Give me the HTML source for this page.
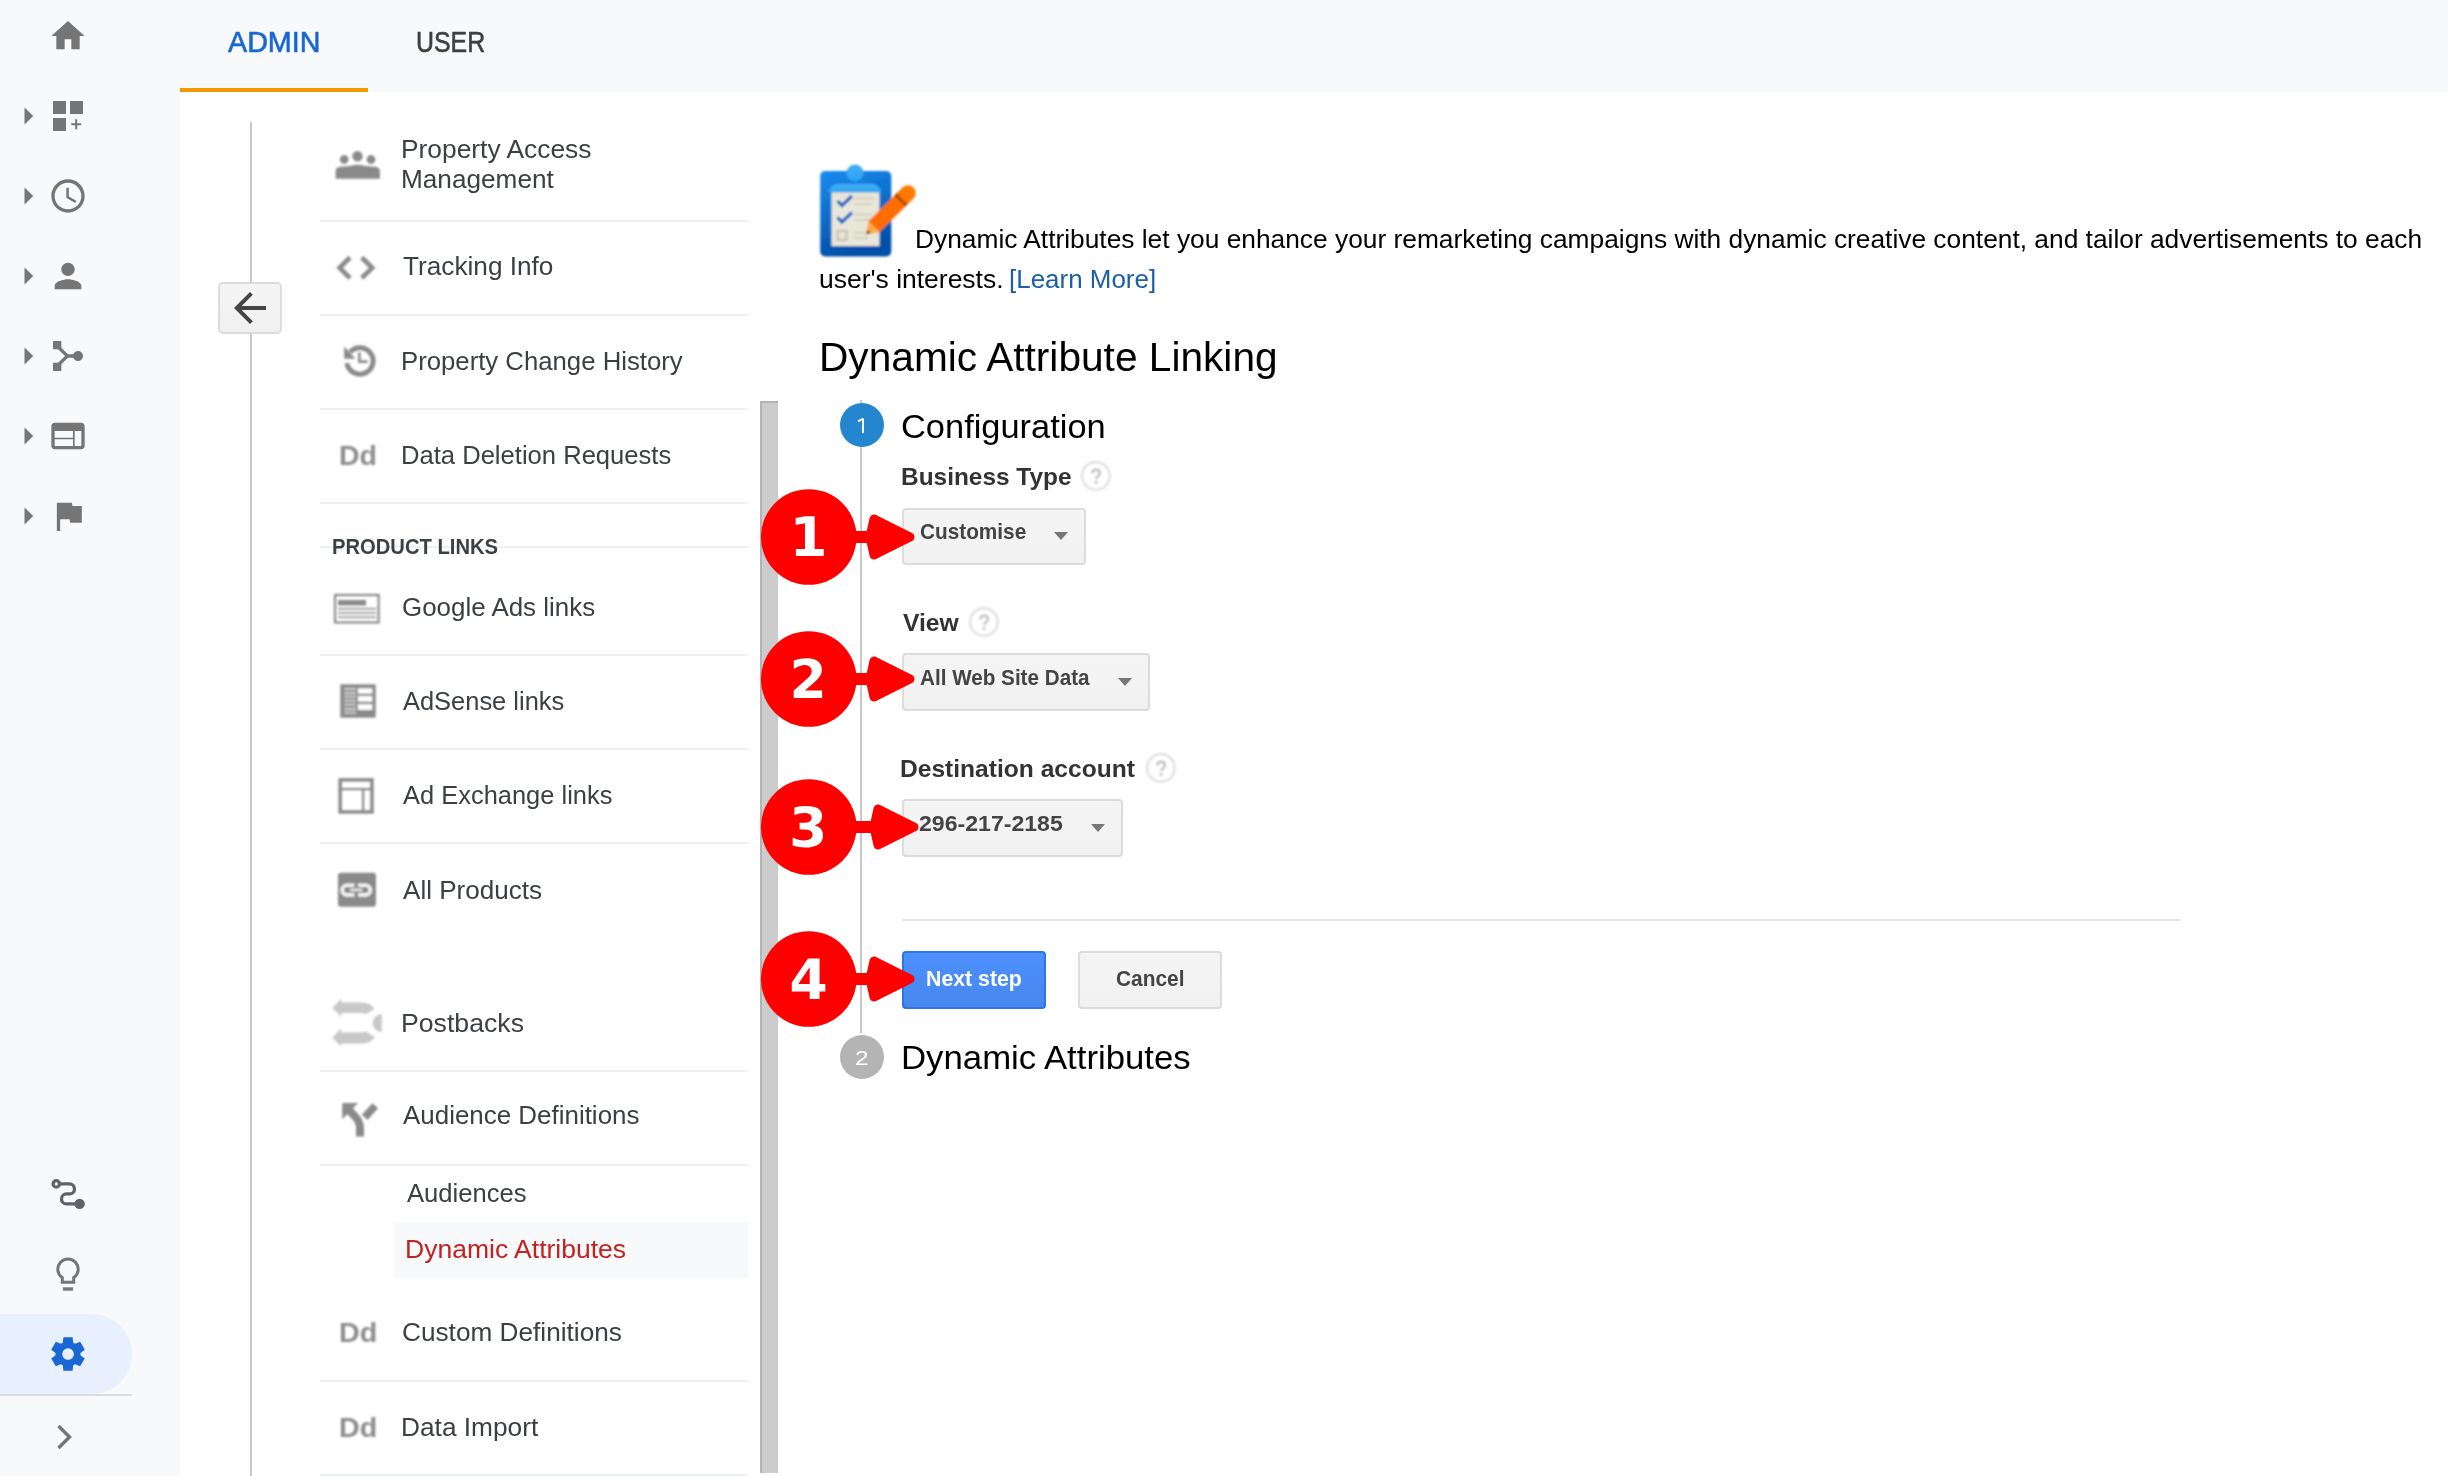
<!DOCTYPE html>
<html><head><meta charset="utf-8">
<style>
html,body{margin:0;padding:0;}
body{width:2448px;height:1476px;position:relative;overflow:hidden;background:#fff;font-family:"Liberation Sans",sans-serif;}
.a{position:absolute;}
.t{position:absolute;white-space:nowrap;line-height:1;transform-origin:0 0;}
.sep{position:absolute;left:320px;width:428px;height:2px;background:#eef1f2;}
.dd{position:absolute;left:902px;border:2px solid #dcdcdc;border-radius:4px;background:linear-gradient(#f5f5f5,#f1f1f1);box-sizing:border-box;}
.help{position:absolute;width:30px;height:30px;border:2px solid #e3e3e3;border-radius:50%;box-sizing:border-box;}
.help b{position:absolute;left:0;top:0;width:26px;text-align:center;font:20px/26px "Liberation Sans",sans-serif;color:#d4d4d4;}
svg{position:absolute;left:0;top:0;overflow:visible;}
</style></head>
<body>

<div class="a" style="left:0;top:0;width:2448px;height:92px;background:#f8f9fa;"></div>
<div class="a" style="left:0;top:0;width:180px;height:1476px;background:#f8f9fa;"></div>
<div class="a" style="left:180px;top:88px;width:188px;height:4px;background:#f29900;"></div>
<div class="a" style="left:-40px;top:1314px;width:172px;height:80px;border-radius:0 40px 40px 0;background:#e8f0fe;"></div>
<div class="a" style="left:0;top:1394px;width:132px;height:2px;background:#dadce0;"></div>
<div class="a" style="left:250px;top:122px;width:2px;height:1354px;background:#c8c8c8;"></div>
<div class="a" style="left:218px;top:282px;width:64px;height:52px;border:2px solid #dcdcdc;border-radius:5px;background:linear-gradient(#f5f5f5,#f0f0f0);box-sizing:border-box;"></div>
<div class="sep" style="top:220px;"></div>
<div class="sep" style="top:314px;"></div>
<div class="sep" style="top:408px;"></div>
<div class="sep" style="top:502px;"></div>
<div class="sep" style="top:546px;"></div>
<div class="sep" style="top:654px;"></div>
<div class="sep" style="top:748px;"></div>
<div class="sep" style="top:842px;"></div>
<div class="sep" style="top:1070px;"></div>
<div class="sep" style="top:1164px;"></div>
<div class="sep" style="top:1380px;"></div>
<div class="sep" style="top:1474px;"></div>
<div class="a" style="left:394px;top:1222px;width:354px;height:56px;background:#f8f9fa;"></div>
<div class="a" style="left:760px;top:401px;width:18px;height:1072px;background:#cccccc;border-left:2px solid #b3b3b3;border-top:2px solid #b3b3b3;box-sizing:border-box;"></div>
<div class="a" style="left:860px;top:400px;width:2px;height:633px;background:#c8c8c8;"></div>
<div class="a" style="left:840px;top:403px;width:44px;height:44px;border-radius:50%;background:#2486cf;"></div>
<div class="a" style="left:840px;top:1035px;width:44px;height:44px;border-radius:50%;background:#b4b4b4;"></div>
<div class="dd" style="top:508px;width:184px;height:57px;"></div>
<div class="dd" style="top:653px;width:248px;height:58px;"></div>
<div class="dd" style="top:799px;width:221px;height:58px;"></div>
<div class="a" style="left:902px;top:919px;width:1278px;height:2px;background:#e5e5e5;"></div>
<div class="a" style="left:902px;top:951px;width:144px;height:58px;border:2px solid #2f74e6;border-radius:4px;background:linear-gradient(#4d90fe,#4787ed);box-sizing:border-box;"></div>
<div class="a" style="left:1078px;top:951px;width:144px;height:58px;border:2px solid #dcdcdc;border-radius:4px;background:linear-gradient(#f5f5f5,#f1f1f1);box-sizing:border-box;"></div>
<div class="t" id="admin" style="left:228.40px;top:28.00px;font-size:29px;color:#1967d2;transform:scaleX(0.9890);-webkit-text-stroke:0.6px #1967d2;">ADMIN</div>
<div class="t" id="user" style="left:415.88px;top:28.00px;font-size:29px;color:#3c4043;transform:scaleX(0.8584);-webkit-text-stroke:0.6px #3c4043;">USER</div>
<div class="t" id="n1" style="left:400.97px;top:136.20px;font-size:26px;color:#3c4043;transform:scaleX(1.0135);">Property Access</div>
<div class="t" id="n1b" style="left:400.99px;top:166.00px;font-size:26px;color:#3c4043;transform:scaleX(1.0067);">Management</div>
<div class="t" id="n2" style="left:402.70px;top:253.00px;font-size:26px;color:#3c4043;transform:scaleX(1.0074);">Tracking Info</div>
<div class="t" id="n3" style="left:401.02px;top:348.00px;font-size:26px;color:#3c4043;transform:scaleX(0.9894);">Property Change History</div>
<div class="t" id="n4" style="left:401.03px;top:441.70px;font-size:26px;color:#3c4043;transform:scaleX(0.9842);">Data Deletion Requests</div>
<div class="t" id="pl" style="left:331.78px;top:536.00px;font-size:22px;font-weight:bold;color:#3c4043;transform:scaleX(0.9179);">PRODUCT LINKS</div>
<div class="t" id="n5" style="left:402.00px;top:594.30px;font-size:26px;color:#3c4043;transform:scaleX(0.9974);">Google Ads links</div>
<div class="t" id="n6" style="left:403.00px;top:688.00px;font-size:26px;color:#3c4043;transform:scaleX(0.9787);">AdSense links</div>
<div class="t" id="n7" style="left:403.00px;top:782.00px;font-size:26px;color:#3c4043;transform:scaleX(0.9789);">Ad Exchange links</div>
<div class="t" id="n8" style="left:403.00px;top:877.00px;font-size:26px;color:#3c4043;transform:scaleX(1.0029);">All Products</div>
<div class="t" id="n9" style="left:400.95px;top:1010.00px;font-size:26px;color:#3c4043;transform:scaleX(1.0256);">Postbacks</div>
<div class="t" id="n10" style="left:403.00px;top:1102.40px;font-size:26px;color:#3c4043;transform:scaleX(0.9975);">Audience Definitions</div>
<div class="t" id="n11" style="left:407.20px;top:1179.60px;font-size:26px;color:#3c4043;transform:scaleX(0.9843);">Audiences</div>
<div class="t" id="n12" style="left:404.66px;top:1236.30px;font-size:26px;color:#c5221f;transform:scaleX(1.0201);">Dynamic Attributes</div>
<div class="t" id="n13" style="left:401.99px;top:1319.00px;font-size:26px;color:#3c4043;transform:scaleX(1.0079);">Custom Definitions</div>
<div class="t" id="n14" style="left:400.98px;top:1414.00px;font-size:26px;color:#3c4043;transform:scaleX(1.0104);">Data Import</div>
<div class="t" id="dd1" style="left:339.47px;top:441.80px;font-size:28px;font-weight:bold;color:#8c8c8c;transform:scaleX(1.0147);filter:blur(0.8px);">Dd</div>
<div class="t" id="dd2" style="left:339.45px;top:1319.00px;font-size:28px;font-weight:bold;color:#8c8c8c;transform:scaleX(1.0235);filter:blur(0.8px);">Dd</div>
<div class="t" id="dd3" style="left:339.45px;top:1413.50px;font-size:28px;font-weight:bold;color:#8c8c8c;transform:scaleX(1.0235);filter:blur(0.8px);">Dd</div>
<div class="t" id="m1" style="left:915.18px;top:225.80px;font-size:26px;color:#000;transform:scaleX(1.0125);">Dynamic Attributes let you enhance your remarketing campaigns with dynamic creative content, and tailor advertisements to each</div>
<div class="t" id="m2a" style="left:818.66px;top:265.90px;font-size:26px;color:#000;transform:scaleX(1.0181);">user's interests.</div>
<div class="t" id="m2b" style="left:1008.90px;top:265.90px;font-size:26px;color:#1a5fa8;transform:scaleX(0.9979);">[Learn More]</div>
<div class="t" id="m3" style="left:818.55px;top:337.00px;font-size:40px;color:#000;transform:scaleX(1.0161);">Dynamic Attribute Linking</div>
<div class="t" id="m4" style="left:901.48px;top:409.00px;font-size:34px;color:#000;transform:scaleX(1.0121);">Configuration</div>
<div class="t" id="l1" style="left:900.76px;top:464.70px;font-size:24px;font-weight:bold;color:#333;transform:scaleX(1.0176);">Business Type</div>
<div class="t" id="d1" style="left:919.56px;top:520.80px;font-size:22px;font-weight:bold;color:#444;transform:scaleX(0.9441);">Customise</div>
<div class="t" id="l2" style="left:902.80px;top:610.80px;font-size:24px;font-weight:bold;color:#333;transform:scaleX(1.0278);">View</div>
<div class="t" id="d2" style="left:919.56px;top:666.90px;font-size:22px;font-weight:bold;color:#444;transform:scaleX(0.9389);">All Web Site Data</div>
<div class="t" id="l3" style="left:900.35px;top:757.30px;font-size:24px;font-weight:bold;color:#333;transform:scaleX(1.0242);">Destination account</div>
<div class="t" id="d3" style="left:918.95px;top:813.00px;font-size:22px;font-weight:bold;color:#444;transform:scaleX(1.0493);">296-217-2185</div>
<div class="t" id="b1" style="left:926.33px;top:968.30px;font-size:22px;font-weight:bold;color:#fff;transform:scaleX(0.9680);">Next step</div>
<div class="t" id="b2" style="left:1115.65px;top:968.30px;font-size:22px;font-weight:bold;color:#444;transform:scaleX(0.9486);">Cancel</div>
<div class="t" id="m5" style="left:901.23px;top:1040.40px;font-size:34px;color:#000;transform:scaleX(1.0222);">Dynamic Attributes</div>
<div class="t" id="s2" style="left:855.28px;top:1048.00px;font-size:20px;color:#fff;transform:scaleX(1.2222);">2</div>
<svg width="2448" height="1476" viewBox="0 0 2448 1476"><g fill="#757575"><path transform="translate(48,16) scale(1.6667)" d="M10 20v-6h4v6h5v-8h3L12 3 2 12h3v8z"/><rect x="53" y="101" width="13" height="13"/><rect x="70" y="101" width="13" height="13"/><rect x="53" y="118" width="13" height="13"/><path transform="translate(48,176) scale(1.6667)" d="M11.99 2C6.47 2 2 6.48 2 12s4.47 10 9.99 10C17.52 22 22 17.52 22 12S17.52 2 11.99 2zM12 20c-4.42 0-8-3.58-8-8s3.58-8 8-8 8 3.58 8 8-3.58 8-8 8zm.5-13H11v6l5.25 3.15.75-1.23-4.5-2.67z"/><path transform="translate(48,256) scale(1.6667)" d="M12 12c2.21 0 4-1.79 4-4s-1.79-4-4-4-4 1.79-4 4 1.79 4 4 4zm0 2c-2.67 0-8 1.34-8 4v2h16v-2c0-2.66-5.33-4-8-4z"/><path transform="translate(88,336) rotate(90) scale(1.6667)" d="M17 16l-4-4V8.82C14.16 8.4 15 7.3 15 6c0-1.66-1.34-3-3-3S9 4.34 9 6c0 1.3.84 2.4 2 2.82V12l-4 4H3v5h5v-3.05l4-4.2 4 4.2V21h5v-5h-4z"/><path transform="translate(48,416) scale(1.6667)" d="M20 4H4c-1.1 0-1.99.9-1.99 2L2 18c0 1.1.9 2 2 2h16c1.1 0 2-.9 2-2V6c0-1.1-.9-2-2-2zm-5 14H4v-4h11v4zm0-5H4V9h11v4zm5 5h-4V9h4v9z"/><path transform="translate(48.5,496) scale(1.6667)" d="M14.4 6L14 4H5v17h2v-7h5.6l.4 2h7V6z"/><path d="M24.5 107.5 L33.2 116 L24.5 124.5 Z"/><path d="M24.5 187.5 L33.2 196 L24.5 204.5 Z"/><path d="M24.5 267.5 L33.2 276 L24.5 284.5 Z"/><path d="M24.5 347.5 L33.2 356 L24.5 364.5 Z"/><path d="M24.5 427.5 L33.2 436 L24.5 444.5 Z"/><path d="M24.5 507.5 L33.2 516 L24.5 524.5 Z"/></g><path d="M76.2 119.2 V129.2 M71.2 124.2 H81.2" stroke="#757575" stroke-width="2"/><g fill="none" stroke="#5f6368" stroke-width="3.3"><circle cx="56.3" cy="1183.9" r="3.2"/><path d="M59.5 1183.9 H69.5 A5 5 0 0 1 69.5 1193.9 H66.5 A5 5 0 0 0 66.5 1203.9 H76"/></g><circle cx="79.6" cy="1203.9" r="5.2" fill="#5f6368"/><path d="M62.3 1282.2 V1277.6 A10.2 10.2 0 1 1 73.7 1277.6 V1282.2 Z" fill="none" stroke="#757575" stroke-width="3"/><rect x="63" y="1287.3" width="10" height="3.4" fill="#757575"/><path transform="translate(48,1334) scale(0.041667)" fill="#1967d2" d="M370 880l-16-128q-13-5-24.5-12T307 725l-119 50L78 585l103-78q-1-7-1-13.5v-27q0-6.5 1-13.5L78 375l110-190 119 50q11-8 23-15t24-12l16-128h220l16 128q13 5 24.5 12t22.5 15l119-50 110 190-103 78q1 7 1 13.5v27q0 6.5-2 13.5l103 78-110 190-118-50q-11 8-23 15t-24 12L590 880H370Zm112-260q58 0 99-41t41-99q0-58-41-99t-99-41q-59 0-99.5 41T342 480q0 58 40.5 99t99.5 41Z"/><path d="M58.5 1426 L69.5 1437 L58.5 1448" fill="none" stroke="#757575" stroke-width="3.4"/><path transform="translate(226,284) scale(2)" fill="#444" d="M20 11H7.83l5.59-5.59L12 4l-8 8 8 8 1.41-1.41L7.83 13H20v-2z"/><defs><filter id="bl" x="-20%" y="-20%" width="140%" height="140%"><feGaussianBlur stdDeviation="0.8"/></filter><filter id="bl2" x="-20%" y="-20%" width="140%" height="140%"><feGaussianBlur stdDeviation="0.8"/></filter></defs><g filter="url(#bl)"><g fill="#8a8a8a"><circle cx="344.2" cy="159.5" r="4.4"/><circle cx="357.5" cy="156.2" r="5.2"/><circle cx="371" cy="159.5" r="4.4"/><path d="M335.6 178.7 V171 Q335.6 167.5 340 166.8 L350 166 Q357.5 163.5 365 166 L375.5 166.8 Q379.9 167.5 379.9 171 V178.7 Z"/></g><path d="M350 257.5 L339.6 267.8 L350 278 M361.8 257.5 L372.2 267.8 L361.8 278" fill="none" stroke="#8a8a8a" stroke-width="4.6"/><path d="M350.09 352.07 A13.2 13.2 0 1 1 346.88 363.10" fill="none" stroke="#8a8a8a" stroke-width="5"/><polygon points="344.1,346.5 344.1,358.7 355.5,358.7" fill="#8a8a8a"/><path d="M359.35 352.6 V361.6 H367.5" fill="none" stroke="#8a8a8a" stroke-width="2.6"/><rect x="335" y="595" width="43.6" height="27.4" fill="none" stroke="#8a8a8a" stroke-width="2.2"/><rect x="338" y="600" width="28" height="5.5" fill="#8a8a8a"/><path d="M338 608.8 H376 M338 613 H376 M338 617.2 H376" stroke="#8a8a8a" stroke-width="1.5"/><rect x="340.3" y="684.3" width="35.4" height="33.4" fill="#8a8a8a"/><path d="M344.3 689 H356.1 M344.3 692.9 H356.1 M344.3 696.8 H356.1 M344.3 700.8 H356.1 M344.3 704.8 H356.1 M344.3 708.9 H356.1 M344.3 712.8 H356.1" stroke="#d0d0d0" stroke-width="2"/><rect x="358" y="688.3" width="14.3" height="5.4" fill="#fff"/><rect x="358" y="696.1" width="14.3" height="5.6" fill="#fff"/><rect x="358" y="704.2" width="14.3" height="5.7" fill="#fff"/><rect x="340.15" y="779.85" width="31.8" height="32.1" fill="none" stroke="#8a8a8a" stroke-width="3.5"/><rect x="340" y="788" width="32" height="2.2" fill="#8a8a8a"/><rect x="362" y="789" width="2.2" height="23" fill="#8a8a8a"/><rect x="338" y="872.7" width="38" height="34" rx="3" fill="#8a8a8a"/><path d="M354.4 885.3 H347 A4.8 4.8 0 0 0 347 894.9 H354.4 M358.1 885.3 H365.5 A4.8 4.8 0 0 1 365.5 894.9 H358.1" fill="none" stroke="#f4f4f4" stroke-width="3.6"/><path d="M350 889.9 H362.5" stroke="#f0f0f0" stroke-width="2.2"/><g fill="#c8c8c8"><path d="M332.4 1007.9 L341.3 998.4 V1002.6 H362 Q370 1002.6 374.4 1008.9 L366 1014 Q364 1013.1 360 1013.1 H341.3 V1016.8 Z"/><path d="M332.4 1037.8 L341.3 1028.3 V1032.5 H360 Q364 1032.5 366 1031.5 L374.9 1037.3 Q370 1043.6 362 1043.6 H341.3 V1046.7 Z"/><path d="M381.7 1014 A9 9 0 0 0 381.7 1032 Z"/></g><polygon points="342.3,1102.9 358,1102.9 342.3,1119.2" fill="#8a8a8a"/><path d="M348 1109 L355 1116.5 Q360 1121.5 360 1128 V1136.5" fill="none" stroke="#8a8a8a" stroke-width="8"/><path d="M364.7 1117.4 L375.2 1105.8" stroke="#8a8a8a" stroke-width="7.6"/></g><polygon points="1054,532 1068,532 1061,540" fill="#777"/><polygon points="1118,678 1132,678 1125,686" fill="#777"/><polygon points="1091,824 1105,824 1098,832" fill="#777"/><defs><linearGradient id="cbg" x1="0" y1="0" x2="0.3" y2="1"><stop offset="0" stop-color="#1a8cf0"/><stop offset="1" stop-color="#0050a8"/></linearGradient>
<linearGradient id="clg" x1="0" y1="0" x2="0" y2="1"><stop offset="0" stop-color="#46aef5"/><stop offset="1" stop-color="#27a4f3"/></linearGradient></defs>
<g filter="url(#bl2)">
<rect x="820.2" y="171.1" width="71.1" height="85.4" rx="5" fill="url(#cbg)"/>
<rect x="831.5" y="192.3" width="48" height="53.7" fill="#e8e6d8"/>
<circle cx="855" cy="173" r="8.5" fill="url(#clg)"/>
<path d="M828 191.9 Q830 185 838 184 H872 Q880 185 881.5 191.9 Z" fill="url(#clg)"/>
<path d="M837.5 201 L842 205.5 L852 196" fill="none" stroke="#0f62c8" stroke-width="3.2"/>
<path d="M837.5 217.5 L842 222 L852 212.5" fill="none" stroke="#0f62c8" stroke-width="3.2"/>
<rect x="837.5" y="231" width="9" height="9" fill="none" stroke="#c8c4b4" stroke-width="2.2"/>
<path d="M854.5 198.5 H874 M854.5 204 H872 M854.5 214.5 H872 M854.5 220 H872 M854.5 233 H865 M854.5 238 H868" stroke="#d2cfbd" stroke-width="2"/>
<polygon points="879.27,232.28 913.45,198.51 902.55,187.49 868.38,221.26" fill="#ff6d00"/><circle cx="908.0" cy="193.0" r="7.75" fill="#ff7a00"/><polygon points="879.27,232.28 868.38,221.26 866.00,234.50" fill="#ffab40"/><polygon points="870.75,232.90 867.65,229.77 866.00,234.50" fill="#444"/><path d="M906.33,205.54 L895.44,194.52" stroke="#a84a00" stroke-width="3"/>
</g><path d="M863 433 V418.6 M858 421.4 L863.4 418.5" fill="none" stroke="#fff" stroke-width="1.9"/><g transform="translate(1095.9,475.9)" filter="url(#bl)"><circle r="13.8" fill="none" stroke="#dedede" stroke-width="2.2"/><path d="M-3.7 -2.6 Q-3.4 -6.2 0.2 -6.2 Q3.9 -6.2 3.9 -3 Q3.9 -1.1 2.1 0.3 Q0.3 1.6 0.3 3.4" fill="none" stroke="#c2c2c2" stroke-width="2.6"/><circle cx="0.2" cy="6.6" r="1.6" fill="#c2c2c2"/></g><g transform="translate(983.9,621.9)" filter="url(#bl)"><circle r="13.8" fill="none" stroke="#dedede" stroke-width="2.2"/><path d="M-3.7 -2.6 Q-3.4 -6.2 0.2 -6.2 Q3.9 -6.2 3.9 -3 Q3.9 -1.1 2.1 0.3 Q0.3 1.6 0.3 3.4" fill="none" stroke="#c2c2c2" stroke-width="2.6"/><circle cx="0.2" cy="6.6" r="1.6" fill="#c2c2c2"/></g><g transform="translate(1160.9,767.9)" filter="url(#bl)"><circle r="13.8" fill="none" stroke="#dedede" stroke-width="2.2"/><path d="M-3.7 -2.6 Q-3.4 -6.2 0.2 -6.2 Q3.9 -6.2 3.9 -3 Q3.9 -1.1 2.1 0.3 Q0.3 1.6 0.3 3.4" fill="none" stroke="#c2c2c2" stroke-width="2.6"/><circle cx="0.2" cy="6.6" r="1.6" fill="#c2c2c2"/></g><circle cx="808.7" cy="537" r="47.8" fill="#fe0000"/><rect x="848.7" y="531" width="45.299999999999955" height="12" fill="#fe0000"/><polygon points="874,519 910,537 874,555 870,537" fill="#fe0000" stroke="#fe0000" stroke-width="9" stroke-linejoin="round"/><path fill="#fff" transform="translate(789.49,556.00) scale(0.02666,-0.02666)" d="M240 266H580V1231L231 1159V1421L578 1493H944V266H1284V0H240Z"/><circle cx="808.7" cy="679" r="47.8" fill="#fe0000"/><rect x="848.7" y="673" width="45.299999999999955" height="12" fill="#fe0000"/><polygon points="874,661 910,679 874,697 870,679" fill="#fe0000" stroke="#fe0000" stroke-width="9" stroke-linejoin="round"/><path fill="#fff" transform="translate(789.46,698.00) scale(0.02618,-0.02618)" d="M590 283H1247V0H162V283L707 764Q780 830 815.0 893.0Q850 956 850 1024Q850 1129 779.5 1193.0Q709 1257 592 1257Q502 1257 395.0 1218.5Q288 1180 166 1104V1432Q296 1475 423.0 1497.5Q550 1520 672 1520Q940 1520 1088.5 1402.0Q1237 1284 1237 1073Q1237 951 1174.0 845.5Q1111 740 909 563Z"/><circle cx="808.7" cy="827" r="47.8" fill="#fe0000"/><rect x="848.7" y="821" width="49.299999999999955" height="12" fill="#fe0000"/><polygon points="878,809 914,827 878,845 874,827" fill="#fe0000" stroke="#fe0000" stroke-width="9" stroke-linejoin="round"/><path fill="#fff" transform="translate(789.01,846.82) scale(0.02692,-0.02692)" d="M954 805Q1105 766 1183.5 669.5Q1262 573 1262 424Q1262 202 1092.0 86.5Q922 -29 596 -29Q481 -29 365.5 -10.5Q250 8 137 45V342Q245 288 351.5 260.5Q458 233 561 233Q714 233 795.5 286.0Q877 339 877 438Q877 540 793.5 592.5Q710 645 547 645H393V893H555Q700 893 771.0 938.5Q842 984 842 1077Q842 1163 773.0 1210.0Q704 1257 578 1257Q485 1257 390.0 1236.0Q295 1215 201 1174V1456Q315 1488 427.0 1504.0Q539 1520 647 1520Q938 1520 1082.5 1424.5Q1227 1329 1227 1137Q1227 1006 1158.0 922.5Q1089 839 954 805Z"/><circle cx="808.7" cy="979" r="47.8" fill="#fe0000"/><rect x="848.7" y="973" width="45.299999999999955" height="12" fill="#fe0000"/><polygon points="874,961 910,979 874,997 870,979" fill="#fe0000" stroke="#fe0000" stroke-width="9" stroke-linejoin="round"/><path fill="#fff" transform="translate(789.31,998.90) scale(0.02706,-0.02706)" d="M754 1176 332 551H754ZM690 1493H1118V551H1331V272H1118V0H754V272H92V602Z"/></svg>

</body></html>
